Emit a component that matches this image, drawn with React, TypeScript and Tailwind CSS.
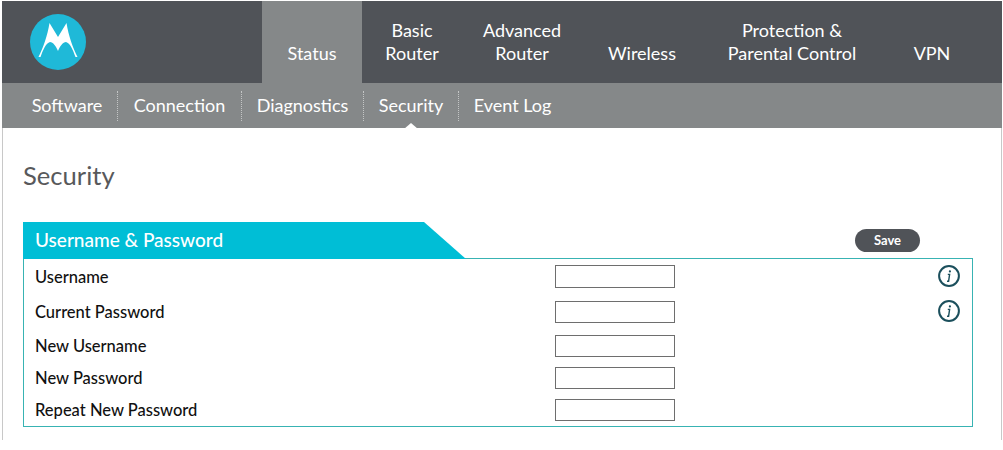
import React from 'react';

const mainNav = [
  { lines: ['Status'], width: 'w-[100px]', active: true },
  { lines: ['Basic', 'Router'], width: 'w-[100px]' },
  { lines: ['Advanced', 'Router'], width: 'w-[120px]' },
  { lines: ['Wireless'], width: 'w-[120px]' },
  { lines: ['Protection &', 'Parental Control'], width: 'w-[180px]' },
  { lines: ['VPN'], width: 'w-[100px]' },
];

const subNav = [
  { label: 'Software', width: 'w-[101px]' },
  { label: 'Connection', width: 'w-[124px]' },
  { label: 'Diagnostics', width: 'w-[122px]' },
  { label: 'Security', width: 'w-[95px]' },
  { label: 'Event Log', width: 'w-[107px]' },
];

const fields = [
  { label: 'Username', row: 'h-[36px]', input: 'h-[23px]', leading: 'leading-[24px]', info: 'ml-[263px]' },
  { label: 'Current Password', row: 'h-[34px]', input: 'h-[22px]', leading: 'leading-[22px]', info: 'ml-[263px] mt-[-1px]' },
  { label: 'New Username', row: 'h-[32px]', input: 'h-[22px]', leading: 'leading-[22px]' },
  { label: 'New Password', row: 'h-[32px]', input: 'h-[22px]', leading: 'leading-[22px]' },
  { label: 'Repeat New Password', row: 'h-[28px]', input: 'h-[22px]', leading: 'leading-[22px]' },
];

function Logo() {
  return (
    <svg width="56" height="56" viewBox="0 0 56 56">
      <circle cx="28" cy="28" r="28" fill="#1fb9d8" />
      <path
        d="M19.5 9 L28 23 L36.5 9 C38.5 22 43 34 47.5 43 L45.5 43 C43 36 40 29 36 28 C33 28 30 32 28 37 C26 32 23 28 20 28 C16 29 13 36 10.5 43 L8.5 43 C13 34 17.5 22 19.5 9 Z"
        fill="#ffffff"
      />
    </svg>
  );
}

function InfoIcon() {
  return (
    <svg width="22" height="22" viewBox="0 0 22 22" fill="none">
      <circle cx="11" cy="11" r="9.9" stroke="#1b4f5c" strokeWidth="2" />
      <circle cx="11.9" cy="6.4" r="1.1" fill="#1b4f5c" />
      <path d="M9.8 9.4 H11.6 L10.6 16.2 H9" stroke="#1b4f5c" strokeWidth="1.4" />
    </svg>
  );
}

export default function App() {
  return (
    <div className="h-[450px] w-[1003px] bg-white pt-px font-['Lato',sans-serif] overflow-hidden">
      <div className="ml-[2px] mr-[1px] h-[439px] border-x border-[#c8c8c8]">
        {/* Main nav */}
        <div className="ml-[-1px] mr-[-1px] flex h-[82px] bg-[#505358]">
          <div className="flex w-[260px] items-center pb-[1px] pl-[28px]">
            <Logo />
          </div>
          {mainNav.map(item => (
            <div
              key={item.lines.join(' ')}
              className={`flex ${item.width} flex-col items-center justify-end pb-[18px] text-center text-[18px] leading-[23px] text-white ${item.active ? 'bg-[#858889]' : ''}`}
            >
              {item.lines.map(line => (
                <span key={line}>{line}</span>
              ))}
            </div>
          ))}
        </div>

        {/* Sub nav */}
        <div className="ml-[-1px] mr-[-1px] flex h-[45px] items-center bg-[#858889] pl-[15px]">
          {subNav.map((item, i) => (
            <div
              key={item.label}
              className={`relative flex h-[30px] ${item.width} items-center justify-center text-[18px] text-white ${i < subNav.length - 1 ? 'border-r border-dotted border-[#c4c6c6]' : ''}`}
            >
              {item.label}
              {item.label === 'Security' && (
                <span className="absolute bottom-[-8px] left-1/2 ml-[-7px] h-0 w-0 border-x-[7px] border-b-[6px] border-x-transparent border-b-white" />
              )}
            </div>
          ))}
        </div>

        {/* Content */}
        <div className="px-[20px]">
          <h1 className="mt-[31px] h-[32px] text-[25.6px] leading-[32px] text-[#58595b]">Security</h1>

          <div className="mt-[31px] flex h-[37px] items-start">
            <div className="flex h-[37px] w-[443px] items-center bg-[#00bed6] pl-[12px] text-[19px] font-medium text-white [clip-path:polygon(0_0,401px_0,100%_100%,0_100%)]">
              Username &amp; Password
            </div>
            <button className="ml-[389px] mt-[7px] h-[23px] w-[65px] rounded-full bg-[#505358] text-[13px] font-bold text-white">
              Save
            </button>
          </div>

          <div className="mt-[-1px] h-[169px] w-[950px] border border-[#38b3b3] pt-[6px]">
            {fields.map(field => (
              <div key={field.label} className={`flex ${field.row} items-start`}>
                <span className={`w-[531px] pl-[11px] text-[16.5px] ${field.leading} font-medium text-[#111111]`}>
                  {field.label}
                </span>
                <input
                  type="text"
                  aria-label={field.label}
                  className={`${field.input} w-[120px] border border-[#6e6e6e] bg-white`}
                />
                {field.info && (
                  <span className={field.info}>
                    <InfoIcon />
                  </span>
                )}
              </div>
            ))}
          </div>
        </div>
      </div>
    </div>
  );
}
